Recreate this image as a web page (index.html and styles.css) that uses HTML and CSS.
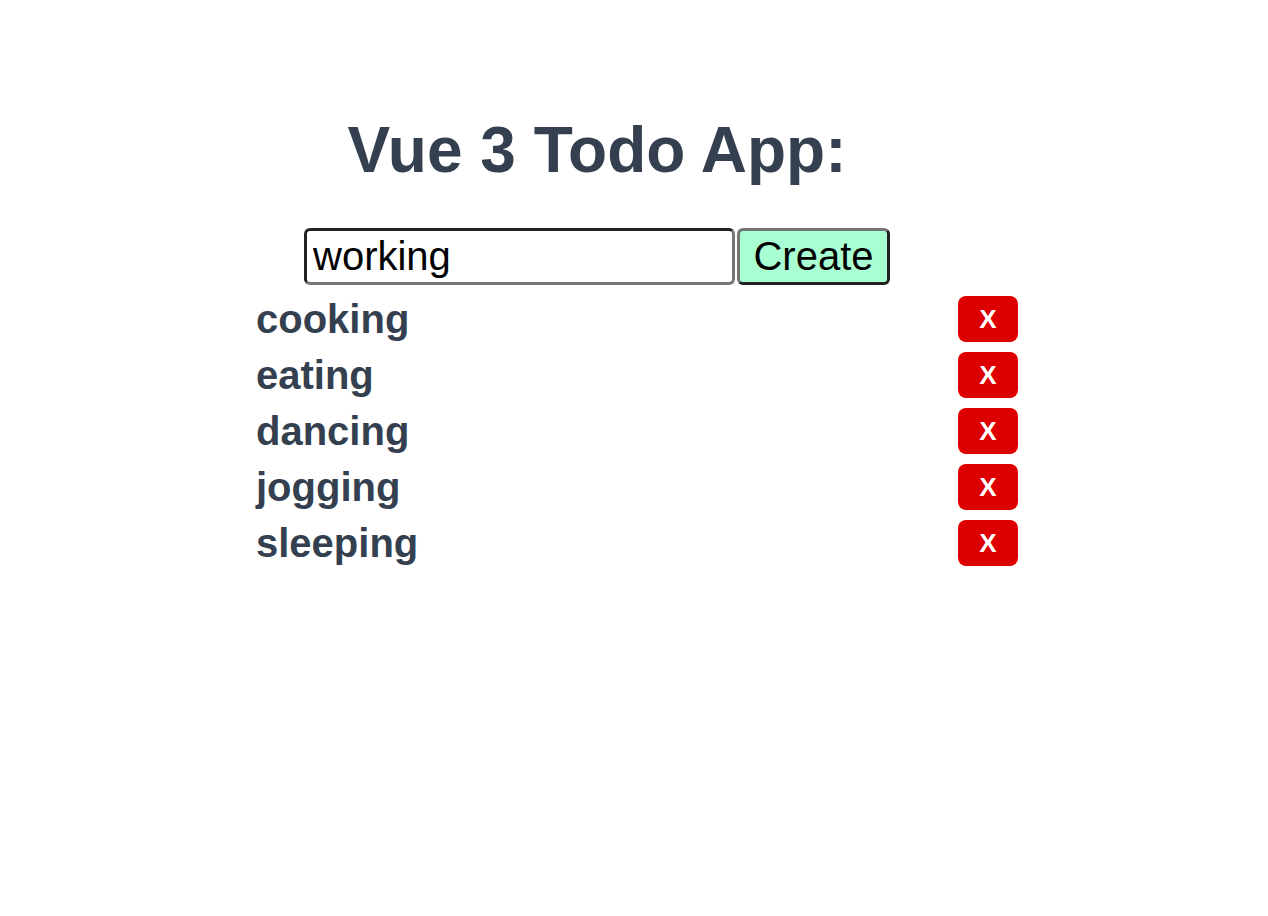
FILE: index.html
```html
<!DOCTYPE html>
<html>
<head>
<meta charset="utf-8">
<link rel="stylesheet" href="styles.css">
</head>
<body>
<div class="app">
  <h1 class="title">Vue 3 Todo App:</h1>
  <form class="todo-form"><input class="todo-input" type="text" value="working"><button class="create-btn" type="button">Create</button></form>
  <ul class="todo-list">
    <li class="todo-item"><span class="todo-text">cooking</span><button class="del-btn" type="button">X</button></li>
    <li class="todo-item"><span class="todo-text">eating</span><button class="del-btn" type="button">X</button></li>
    <li class="todo-item"><span class="todo-text">dancing</span><button class="del-btn" type="button">X</button></li>
    <li class="todo-item"><span class="todo-text">jogging</span><button class="del-btn" type="button">X</button></li>
    <li class="todo-item"><span class="todo-text">sleeping</span><button class="del-btn" type="button">X</button></li>
  </ul>
</div>
</body>
</html>
```
FILE: styles.css
```css
html, body {
  margin: 0;
  padding: 0;
  background: #ffffff;
}
.app {
  font-family: "Liberation Sans", Arial, Helvetica, sans-serif;
  color: #343f4f;
  padding-top: 110px;
  width: 1194px;
}
.title {
  margin: 0;
  text-align: center;
  font-size: 64px;
  line-height: 80px;
  font-weight: bold;
}
.todo-form {
  margin: 38px 0 0 0;
  display: flex;
  justify-content: center;
}
.todo-input {
  box-sizing: border-box;
  width: 431px;
  height: 57px;
  border: 3px solid #767676;
  border-top-color: #222;
  border-left-color: #222;
  border-radius: 6px;
  padding: 0 6px;
  font-family: "Liberation Sans", Arial, sans-serif;
  font-size: 40px;
  color: #000;
  outline: none;
  margin: 0 2px 0 0;
}
.create-btn {
  box-sizing: border-box;
  width: 153px;
  height: 57px;
  border: 3px solid #767676;
  border-right-color: #222;
  border-bottom-color: #222;
  border-radius: 6px;
  background: #aaffd2;
  font-family: "Liberation Sans", Arial, sans-serif;
  font-size: 40px;
  color: #000;
  padding: 0;
  margin: 0;
}
.todo-list {
  list-style: none;
  margin: 11px 0 0 256px;
  padding: 0;
  width: 762px;
}
.todo-item {
  display: flex;
  justify-content: space-between;
  align-items: center;
  height: 46px;
  margin-bottom: 10px;
}
.todo-text {
  font-size: 40px;
  font-weight: bold;
  line-height: 46px;
}
.del-btn {
  width: 60px;
  height: 46px;
  border: none;
  border-radius: 8px;
  background: #dd0000;
  color: #fff;
  font-family: "Liberation Sans", Arial, sans-serif;
  font-size: 26px;
  font-weight: bold;
  padding: 0;
}
```
